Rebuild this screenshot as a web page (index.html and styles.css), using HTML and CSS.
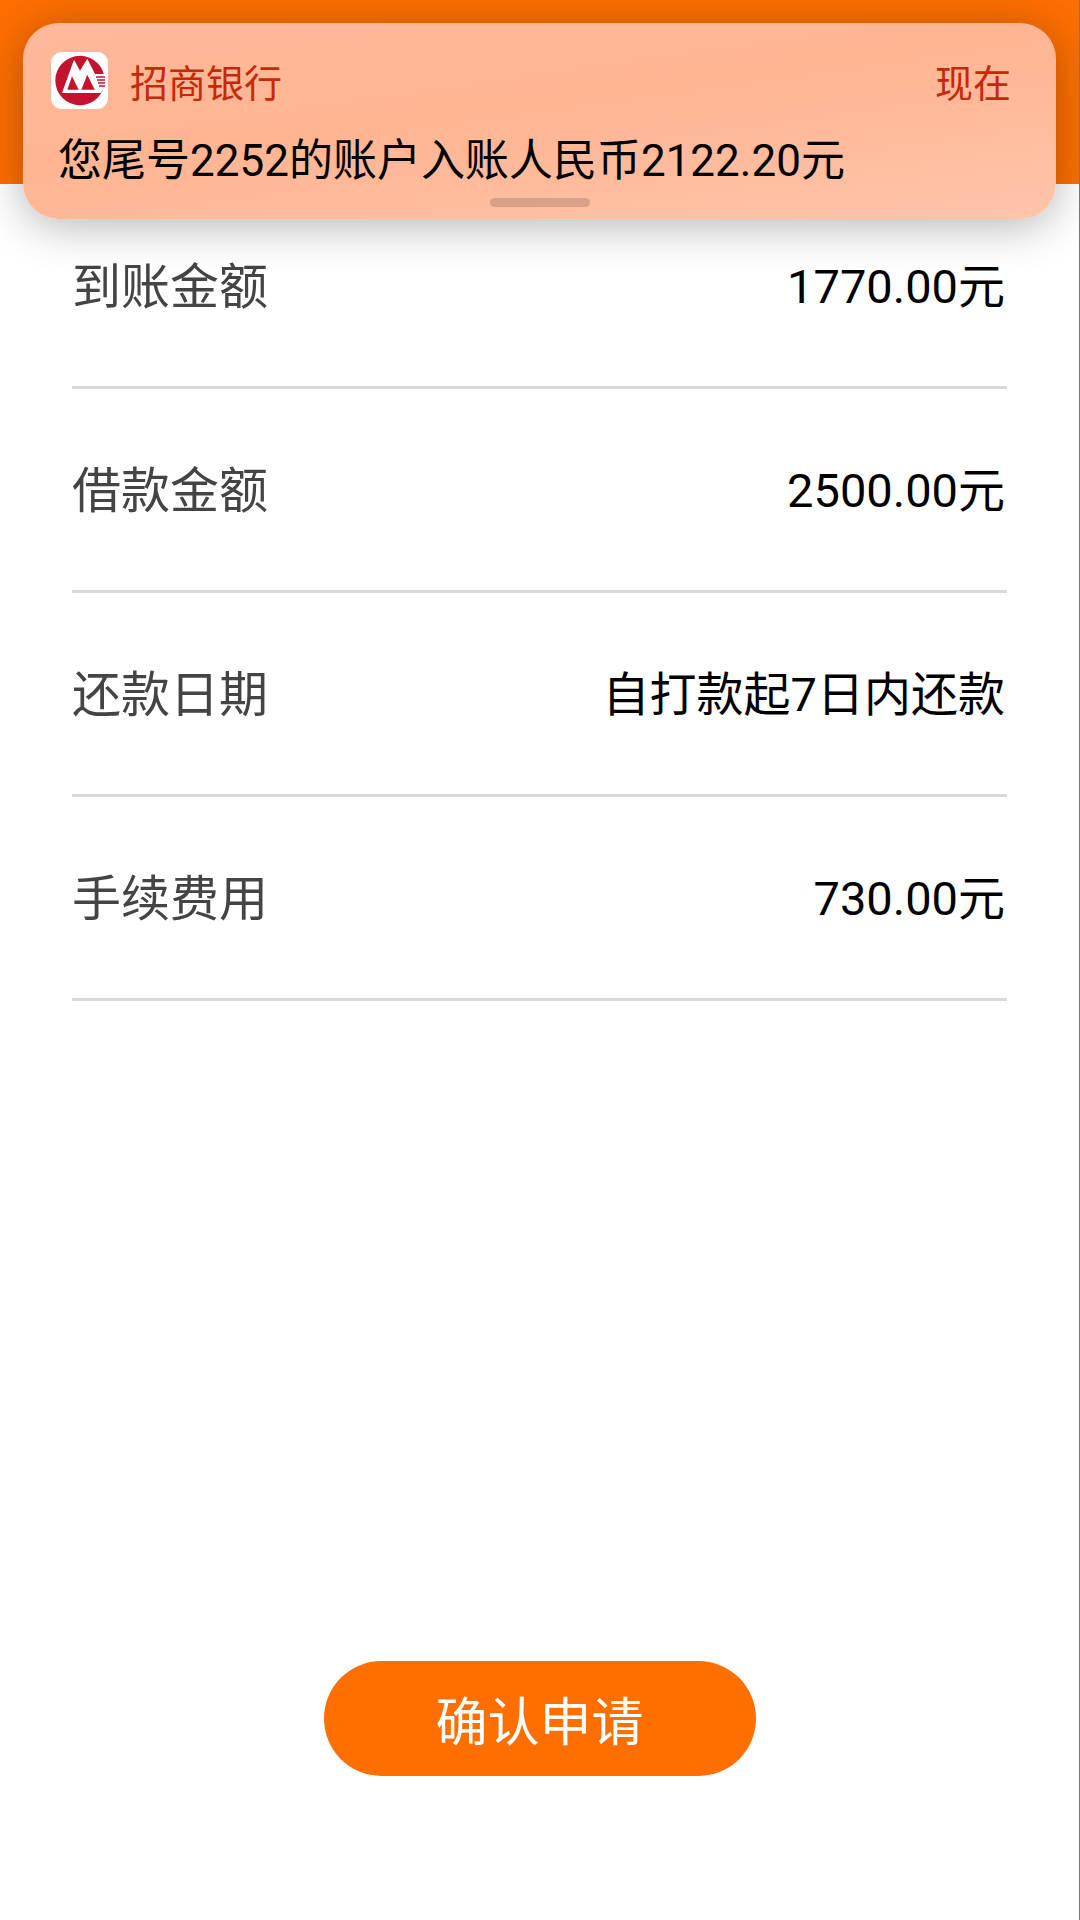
FILE: index.html
```html
<!DOCTYPE html>
<html lang="zh">
  <head>
    <meta charset="UTF-8" />
    <title>确认申请</title>
    <link rel="stylesheet" href="styles.css">
  </head>
  <body>
    <div class="page">
      <div class="top-bar"></div>

      <div class="notice">
        <div class="notice-head">
          <svg class="bank-logo" viewBox="0 0 57 57">
            <rect width="57" height="57" rx="11" fill="#fff" />
            <circle cx="29" cy="28.500" r="24.700" fill="#c4122f" />
            <polygon points="11,41 23,7.700 29,18.700 36.300,6.700 44,22 54,22 54,35 49.700,41" fill="#fff" />
            <polygon points="16.300,37.700 21,24.300 27.700,37.700" fill="#c4122f" />
            <polygon points="30.300,37.700 36.300,22.700 43.700,37.700" fill="#c4122f" />
            <path d="M45 25h9M46 28h8M47 31h7M48 34h6" stroke="#c4122f" stroke-width="1.300" />
          </svg>
          <span class="bank-name">招商银行</span>
          <span class="notice-time">现在</span>
        </div>
        <div class="notice-text">您尾号2252的账户入账人民币2122.20元</div>
        <div class="notice-handle"></div>
      </div>

      <div class="info-list">
        <div class="info-row">
          <span class="info-label">到账金额</span>
          <span class="info-value">1770.00元</span>
        </div>
        <div class="info-row">
          <span class="info-label">借款金额</span>
          <span class="info-value">2500.00元</span>
        </div>
        <div class="info-row">
          <span class="info-label">还款日期</span>
          <span class="info-value">自打款起7日内还款</span>
        </div>
        <div class="info-row">
          <span class="info-label">手续费用</span>
          <span class="info-value">730.00元</span>
        </div>
      </div>

      <button class="confirm-btn" type="button">确认申请</button>
    </div>
  </body>
</html>
```

FILE: styles.css
```css
* {
  box-sizing: border-box;
}
body {
  margin: 0;
  background-color: #fff;
  font-family: Roboto, "Noto Sans CJK SC", sans-serif;
}
.page {
  position: relative;
  display: flex;
  flex-direction: column;
  width: 1080px;
  height: 1920px;
  overflow: hidden;
  border-right: 1px solid #777;
}
.top-bar {
  flex: none;
  height: 184px;
  background-color: #ff6f00;
}
.notice {
  position: absolute;
  top: 23px;
  left: 23px;
  width: 1033px;
  height: 196px;
  padding: 29px 45px 0 28px;
  border-radius: 36px;
  background: linear-gradient(172deg, #feb999 0%, #ffb592 45%, #ffc4aa 100%);
  box-shadow: 0 6px 46px rgba(0, 0, 0, 0.3);
}
.notice-head {
  display: flex;
  align-items: center;
  height: 57px;
  font-size: 38px;
  color: #c4290c;
}
.bank-logo {
  width: 57px;
  height: 57px;
  margin-right: 22px;
}
.notice-time {
  margin-left: auto;
}
.notice-text {
  margin-top: 26px;
  padding-left: 7px;
  font-size: 44px;
  line-height: 52px;
  color: #000;
  white-space: nowrap;
}
.notice-handle {
  position: absolute;
  left: 467px;
  bottom: 12px;
  width: 100px;
  height: 9px;
  border-radius: 5px;
  background-color: rgba(120, 90, 80, 0.28);
}
.info-list {
  padding: 1px 72px 0;
}
.info-row {
  display: flex;
  justify-content: space-between;
  align-items: center;
  height: 204px;
  padding: 0 2px 7px 0;
  border-bottom: 3px solid #d9d9d9;
  font-size: 49px;
}
.info-label {
  color: #444;
}
.info-value {
  font-size: 47px;
  color: #000;
}
.confirm-btn {
  align-self: center;
  width: 432px;
  height: 115px;
  margin-top: 660px;
  border: none;
  border-radius: 58px;
  background-color: #ff6f00;
  color: #fff;
  font-family: inherit;
  font-size: 52px;
}
```
